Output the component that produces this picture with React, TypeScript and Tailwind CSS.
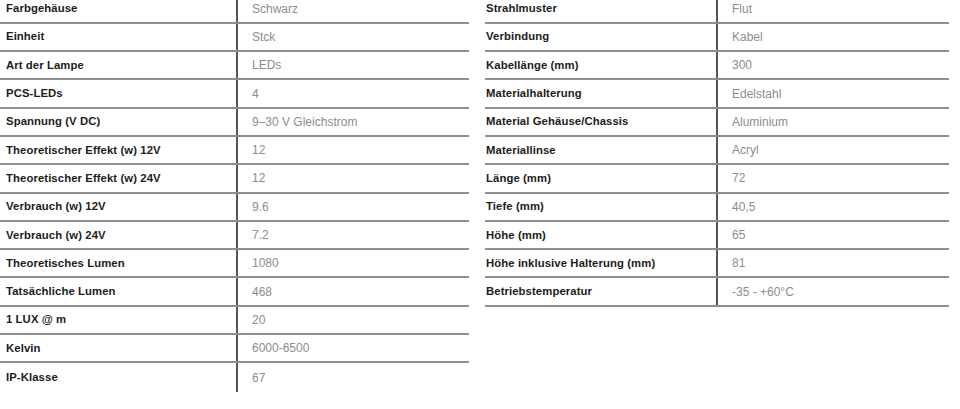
const left: [string, string][] = [
  ["Farbgehäuse", "Schwarz"],
  ["Einheit", "Stck"],
  ["Art der Lampe", "LEDs"],
  ["PCS-LEDs", "4"],
  ["Spannung (V DC)", "9–30 V Gleichstrom"],
  ["Theoretischer Effekt (w) 12V", "12"],
  ["Theoretischer Effekt (w) 24V", "12"],
  ["Verbrauch (w) 12V", "9.6"],
  ["Verbrauch (w) 24V", "7.2"],
  ["Theoretisches Lumen", "1080"],
  ["Tatsächliche Lumen", "468"],
  ["1 LUX @ m", "20"],
  ["Kelvin", "6000-6500"],
  ["IP-Klasse", "67"],
];

const right: [string, string][] = [
  ["Strahlmuster", "Flut"],
  ["Verbindung", "Kabel"],
  ["Kabellänge (mm)", "300"],
  ["Materialhalterung", "Edelstahl"],
  ["Material Gehäuse/Chassis", "Aluminium"],
  ["Materiallinse", "Acryl"],
  ["Länge (mm)", "72"],
  ["Tiefe (mm)", "40,5"],
  ["Höhe (mm)", "65"],
  ["Höhe inklusive Halterung (mm)", "81"],
  ["Betriebstemperatur", "-35 - +60°C"],
];

function SpecTable({
  rows,
  labelWidth,
  labelPad,
  lastLine,
}: {
  rows: [string, string][];
  labelWidth: string;
  labelPad: string;
  lastLine: boolean;
}) {
  return (
    <div className="flex flex-col">
      {rows.map(([label, value], i) => {
        const isLast = i === rows.length - 1;
        return (
          <div
            key={label}
            className={`flex h-[28.3px] items-stretch ${
              isLast && !lastLine ? "" : "border-b-2 border-[#8e8e8e]"
            }`}
          >
            <div
              className={`flex ${labelWidth} ${labelPad} shrink-0 items-center border-r-2 border-[#555] text-[11.3px] font-bold tracking-[0.1px] text-[#1c1c1c]`}
            >
              {label}
            </div>
            <div className="flex items-center pl-[14px] text-[12px] text-[#8c8c8c]">{value}</div>
          </div>
        );
      })}
    </div>
  );
}

export default function App() {
  return (
    <main
      className="h-[409px] w-[960px] overflow-hidden bg-white"
      style={{ fontFamily: '"Liberation Sans", Arial, sans-serif' }}
    >
      <div className="-mt-[4.5px] flex items-start">
        <div className="w-[469px] shrink-0">
          <SpecTable rows={left} labelWidth="w-[238px]" labelPad="pl-[6px]" lastLine={false} />
        </div>
        <div className="ml-[16px] w-[464px] shrink-0">
          <SpecTable rows={right} labelWidth="w-[233px]" labelPad="pl-[1px]" lastLine={true} />
        </div>
      </div>
    </main>
  );
}
